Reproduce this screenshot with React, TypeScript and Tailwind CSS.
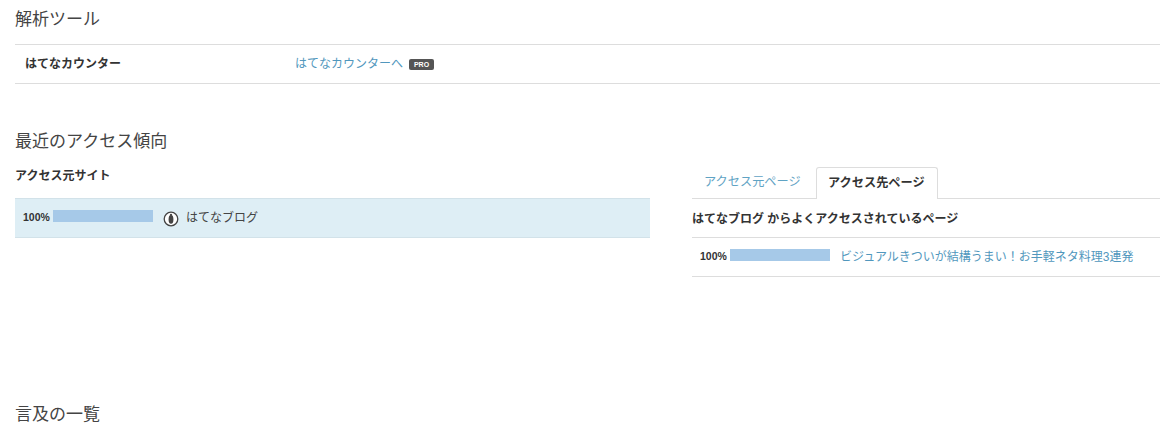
const font = { fontFamily: '"Liberation Sans", "Noto Sans CJK JP", sans-serif' };

function Bar() {
  return <span className="block w-[100px] h-3 mb-[4px] bg-[#a6c9e8]" />;
}

export default function App() {
  return (
    <div className="w-[1160px] h-[431px] overflow-hidden bg-white text-[#333] text-[12px]" style={font}>
      <div className="pl-[15px]">
        <h2 className="h-[45px] pt-[8px] text-[17px] leading-6 text-[#444] border-b border-[#ddd]">解析ツール</h2>
        <div className="h-[39px] flex items-center border-b border-[#ddd]">
          <div className="w-[280px] pl-[10px] font-bold text-[#333]">はてなカウンター</div>
          <a className="text-[#5197bd]">はてなカウンターへ</a>
          <span className="ml-[6px] mt-[1px] w-[25px] h-[11px] rounded-[2px] bg-[#555] text-white text-[7px] leading-[11px] font-bold text-center">PRO</span>
        </div>

        <h2 className="mt-[46px] h-[24px] text-[17px] leading-6 text-[#444]">最近のアクセス傾向</h2>

        <div className="flex">
          <div className="w-[635px]">
            <h3 className="mt-[12px] h-[24px] text-[12px] leading-5 font-bold text-[#333]">アクセス元サイト</h3>
            <div className="mt-[8px] h-[40px] flex items-center pl-[8px] bg-[#deeef5] border-y border-[#d2e2e9]">
              <span className="w-[30px] text-[10.5px] font-bold text-[#333]">100%</span>
              <Bar />
              <svg className="ml-[10px] mt-[2px] w-4 h-4" viewBox="0 0 16 16">
                <circle cx="8" cy="8" r="6.8" fill="#fff" stroke="#444" strokeWidth="1.3" />
                <ellipse cx="8" cy="8.4" rx="2.4" ry="4.4" fill="#444" />
                <circle cx="8" cy="3.8" r="1.1" fill="#444" />
              </svg>
              <span className="ml-[7px] text-[#444]">はてなブログ</span>
            </div>
          </div>

          <div className="ml-[42px] flex-1 min-w-0">
            <div className="mt-[13px] h-[32px] flex items-end border-b border-[#ddd]">
              <a className="w-[124px] h-[31px] pl-[12px] text-[12.2px] leading-[31px] text-[#5fa3c4]">アクセス元ページ</a>
              <span className="relative top-px w-[122px] h-[32px] pl-[11px] text-[12.2px] leading-[31px] font-bold text-[#333] bg-white border border-b-0 border-[#ddd] rounded-t-[3px]">アクセス先ページ</span>
            </div>
            <div className="h-[39px] pt-[1px] flex items-center font-bold text-[#333] border-b border-[#ddd]">はてなブログ からよくアクセスされているページ</div>
            <div className="h-[39px] flex items-center pl-[8px] border-b border-[#ddd]">
              <span className="w-[30px] text-[10.5px] font-bold text-[#333]">100%</span>
              <Bar />
              <a className="ml-[10px] text-[#5197bd]">ビジュアルきついが結構うまい！お手軽ネタ料理3連発</a>
            </div>
          </div>
        </div>

        <h2 className="mt-[126px] text-[17px] leading-6 text-[#444]">言及の一覧</h2>
      </div>
    </div>
  );
}
